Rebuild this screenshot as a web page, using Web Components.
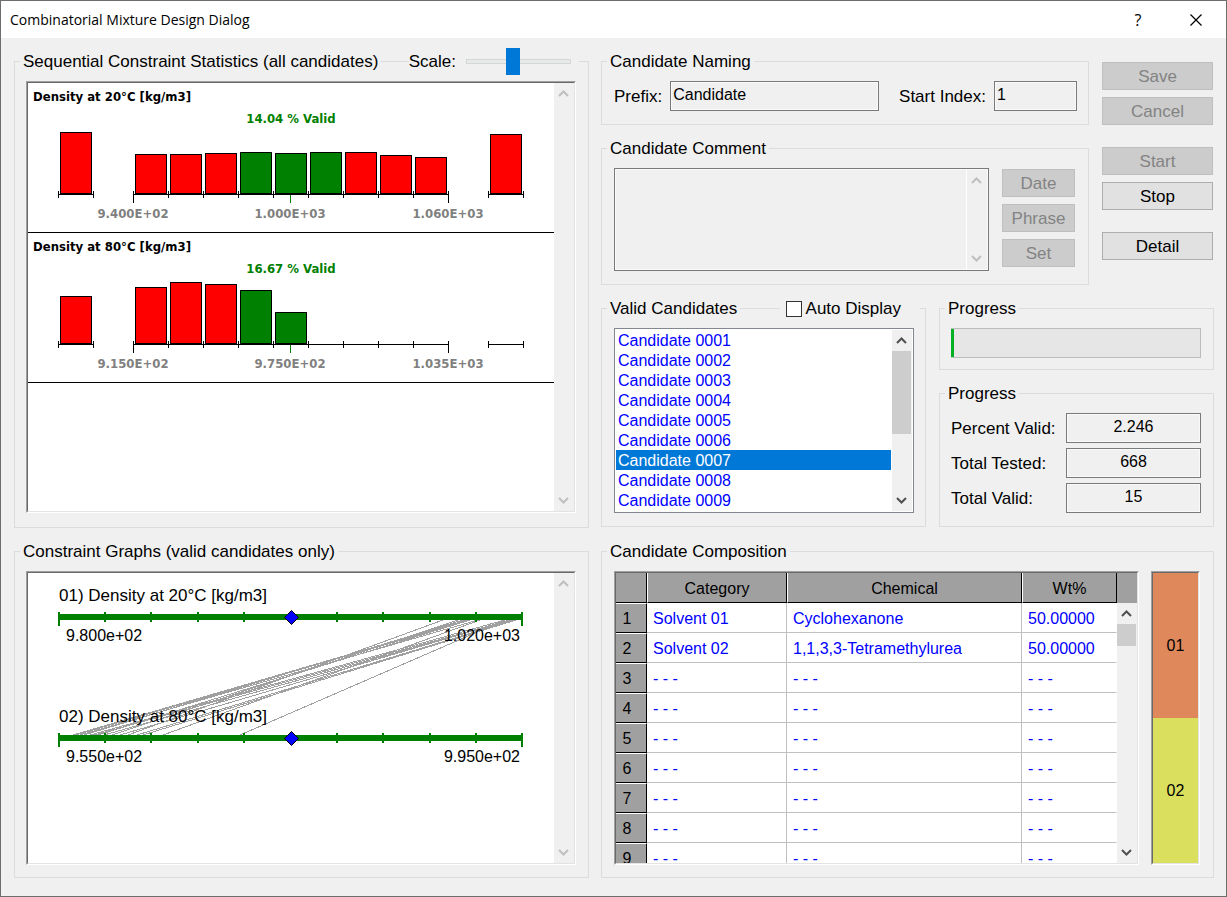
<!DOCTYPE html>
<html lang="en">
<head>
<meta charset="utf-8">
<title>Combinatorial Mixture Design Dialog</title>
<style>
    :root {
        --face: #f0f0f0;
        --line: #dcdcdc;
        --edge: #7a7a7a;
        --accent: #0078d7;
    }

    body {
        margin: 0;
        font: 17px/19px "Liberation Sans", Arial, sans-serif;
        color: #000;
        background: var(--face);
    }

    .sections {
        display: grid;
        grid-template-columns: minmax(0, 575fr) minmax(0, 613fr);
        gap: 14px 12px;
        padding: 14px 12px 18px 13px;
    }

    .top-right {
        display: flex;
        flex-direction: column;
        gap: 14px;
    }

    .row {
        display: flex;
        gap: 13px;
    }

    .stack {
        display: flex;
        flex-direction: column;
        gap: 14px;
        flex: 1;
        min-width: 0;
    }

    .actions {
        display: flex;
        flex-direction: column;
        flex: none;
        gap: 22px;
        width: 111px;
        margin: 10px 1px 0 0;
    }

    .buttons {
        display: flex;
        flex-direction: column;
        gap: 7px;
    }

    .naming {
        display: flex;
        gap: 20px;
    }

    .naming labeled-field:first-child {
        flex: 1;
        min-width: 0;
    }

    .comment {
        display: flex;
        gap: 13px;
    }

    .comment .buttons {
        flex: none;
        width: 73px;
        padding: 1px 2px 0 0;
    }

    .totals {
        display: flex;
        flex-direction: column;
        gap: 5px;
    }

    .valid {
        width: 325px;
    }

    .composition {
        display: flex;
        gap: 12px;
    }

    .composition sunken-panel:first-child {
        flex: 1;
    }

    .composition sunken-panel:last-child {
        width: 49px;
    }

    .statistics {
        --panel-height: 432px;
        --pad: 20px 12px 14px 11px;
    }

    .graphs {
        --pad: 20px 12px 12px 11px;
    }

    .edit {
        --pad: 20px 11px 13px 12px;
    }

    .meter {
        --pad: 20px 12px 11px 11px;
    }

    .counts {
        --pad: 20px 12px 13px 11px;
    }

    .result {
        --pad: 20px 13px 12px 12px;
    }
</style>
</head>
<body>
<dialog-window caption="Combinatorial Mixture Design Dialog">
    <div class="sections">
        <group-box class="statistics" caption="Sequential Constraint Statistics (all candidates)">
            <scale-slider slot="extra" label="Scale:" value="44"></scale-slider>
            <sunken-panel>
                <constraint-histogram caption="Density at 20°C [kg/m3]" valid="14.04 % Valid"
                    low="62" bars="40,40,41,42g,41g,42g,42,39,37" high="60"
                    labels="9.400E+02,1.000E+03,1.060E+03"></constraint-histogram>
                <constraint-histogram caption="Density at 80°C [kg/m3]" valid="16.67 % Valid"
                    low="48" bars="57,62,60,54g,32g,0,0,0,0" high="0"
                    labels="9.150E+02,9.750E+02,1.035E+03"></constraint-histogram>
                <scroll-bar slot="scroll" disabled></scroll-bar>
            </sunken-panel>
        </group-box>

        <div class="top-right">
            <div class="row">
                <div class="stack">
                    <group-box class="edit" caption="Candidate Naming">
                        <div class="naming">
                            <labeled-field label="Prefix:" value="Candidate"></labeled-field>
                            <labeled-field label="Start Index:" value="1" style="--field-width: 83px"></labeled-field>
                        </div>
                    </group-box>
                    <group-box class="edit" caption="Candidate Comment">
                        <div class="comment">
                            <comment-box label="Candidate Comment"></comment-box>
                            <div class="buttons">
                                <push-button disabled>Date</push-button>
                                <push-button disabled>Phrase</push-button>
                                <push-button disabled>Set</push-button>
                            </div>
                        </div>
                    </group-box>
                </div>
                <div class="actions">
                    <div class="buttons">
                        <push-button disabled>Save</push-button>
                        <push-button disabled>Cancel</push-button>
                    </div>
                    <div class="buttons">
                        <push-button disabled>Start</push-button>
                        <push-button>Stop</push-button>
                    </div>
                    <div class="buttons">
                        <push-button>Detail</push-button>
                    </div>
                </div>
            </div>
            <div class="row">
                <group-box class="valid edit" caption="Valid Candidates">
                    <check-box slot="extra" label="Auto Display"></check-box>
                    <candidate-list count="9" selected="7"></candidate-list>
                </group-box>
                <div class="stack">
                    <group-box class="meter" caption="Progress">
                        <progress-meter value="12" max="1000"></progress-meter>
                    </group-box>
                    <group-box class="counts" caption="Progress">
                        <div class="totals">
                            <labeled-field readonly label="Percent Valid:" value="2.246"></labeled-field>
                            <labeled-field readonly label="Total Tested:" value="668"></labeled-field>
                            <labeled-field readonly label="Total Valid:" value="15"></labeled-field>
                        </div>
                    </group-box>
                </div>
            </div>
        </div>

        <group-box class="graphs" caption="Constraint Graphs (valid candidates only)">
            <sunken-panel>
                <constraint-graph></constraint-graph>
                <scroll-bar slot="scroll" disabled></scroll-bar>
            </sunken-panel>
        </group-box>

        <group-box class="result" caption="Candidate Composition">
            <div class="composition">
                <sunken-panel>
                    <composition-table></composition-table>
                </sunken-panel>
                <sunken-panel>
                    <color-stack></color-stack>
                </sunken-panel>
            </div>
        </group-box>
    </div>
</dialog-window>

<script>
class BaseElement extends HTMLElement {
    connectedCallback() {
        if (this.shadowRoot) return;
        this.attachShadow({ mode: 'open' });
        this.shadowRoot.innerHTML = this.render();
    }

    attr(name, fallback = '') {
        return this.getAttribute(name) || fallback;
    }
}

class DialogWindow extends BaseElement {
    render() {
        return `
            <style>
                :host {
                    display: block;
                    box-sizing: border-box;
                    min-height: 100vh;
                    border: 1px solid #6d6d6d;
                    background: var(--face);
                }
                header {
                    display: flex;
                    align-items: center;
                    height: 37px;
                    padding: 0 1px 0 9px;
                    background: #fff;
                }
                h1 {
                    flex: 1;
                    margin: 0;
                    font: 14px/20px "Open Sans", "Noto Sans", sans-serif;
                }
                button {
                    display: flex;
                    align-items: center;
                    justify-content: center;
                    width: 58px;
                    height: 37px;
                    padding: 0;
                    border: 0;
                    background: none;
                    font: 16px/20px "Open Sans", "Noto Sans", sans-serif;
                }
            </style>
            <header>
                <h1>${this.attr('caption')}</h1>
                <button aria-label="Help">?</button>
                <button aria-label="Close">
                    <svg width="12" height="12" viewBox="0 0 12 12"><path d="M.5 .5L11.5 11.5M11.5 .5L.5 11.5" stroke="#000" stroke-width="1.2"/></svg>
                </button>
            </header>
            <slot></slot>
        `;
    }
}

class GroupBox extends BaseElement {
    render() {
        return `
            <style>
                :host {
                    display: flex;
                    flex-direction: column;
                    min-width: 0;
                }
                header {
                    display: flex;
                    align-items: center;
                    height: 19px;
                    white-space: nowrap;
                }
                i {
                    width: 6px;
                    height: 1px;
                    background: var(--line);
                }
                i.fill {
                    flex: 1;
                }
                .caption {
                    padding: 0 3px;
                }
                .body {
                    flex: 1;
                    margin-top: -10px;
                    padding: var(--pad, 20px 12px 13px);
                    border: 1px solid var(--line);
                    border-top: 0;
                }
            </style>
            <header>
                <i></i><span class="caption">${this.attr('caption')}</span><i class="fill"></i>
                <slot name="extra"></slot>
            </header>
            <div class="body" role="group" aria-label="${this.attr('caption')}"><slot></slot></div>
        `;
    }
}

class SunkenPanel extends BaseElement {
    render() {
        return `
            <style>
                :host {
                    display: flex;
                    box-sizing: border-box;
                    height: var(--panel-height, 294px);
                    border: 1px solid;
                    border-color: #a0a0a0 #fff #fff #a0a0a0;
                    background: #fff;
                }
                .inner {
                    display: flex;
                    flex: 1;
                    min-width: 0;
                    border: 1px solid;
                    border-color: #696969 #e3e3e3 #e3e3e3 #696969;
                }
                .view {
                    flex: 1;
                    min-width: 0;
                    overflow: hidden;
                }
            </style>
            <div class="inner">
                <div class="view"><slot></slot></div>
                <slot name="scroll"></slot>
            </div>
        `;
    }
}

class ScrollBar extends BaseElement {
    render() {
        const color = this.hasAttribute('disabled') ? '#bfbfbf' : '#505050';
        const arrow = d => `<svg width="20" height="21" viewBox="0 0 20 21"><path d="${d}" fill="none" stroke="${color}" stroke-width="2"/></svg>`;
        return `
            <style>
                :host {
                    display: flex;
                    flex-direction: column;
                    flex: none;
                    width: 20px;
                    background: var(--face);
                }
                svg {
                    display: block;
                    flex: none;
                }
                .track {
                    flex: 1;
                }
                .thumb {
                    width: 19px;
                    height: var(--thumb, 0);
                    background: #cdcdcd;
                }
            </style>
            ${arrow('M5 13L9.5 8.5L14 13')}
            <div class="track"><div class="thumb"></div></div>
            ${arrow('M5 8L9.5 12.5L14 8')}
        `;
    }
}

class PushButton extends BaseElement {
    render() {
        return `
            <style>
                :host {
                    display: block;
                }
                button {
                    display: block;
                    box-sizing: border-box;
                    width: 100%;
                    height: 28px;
                    padding: 0;
                    border: 1px solid #adadad;
                    background: #e1e1e1;
                    color: #000;
                    font: inherit;
                }
                button:disabled {
                    border-color: #bfbfbf;
                    background: #ccc;
                    color: #838383;
                }
            </style>
            <button ${this.hasAttribute('disabled') ? 'disabled' : ''}><slot></slot></button>
        `;
    }
}

class LabeledField extends BaseElement {
    render() {
        const readonly = this.hasAttribute('readonly');
        return `
            <style>
                :host {
                    display: flex;
                    align-items: center;
                    gap: 8px;
                }
                label {
                    white-space: nowrap;
                    margin-right: auto;
                }
                input {
                    box-sizing: border-box;
                    min-width: 0;
                    height: 30px;
                    padding: 0 2px 2px;
                    border: 1px solid var(--edge);
                    border-radius: 0;
                    outline: 0;
                    background: var(--face);
                    box-shadow: inset 0 0 0 1px #fafafa;
                    color: #000;
                    font: inherit;
                    font-size: 16px;
                    ${readonly ? 'width: 135px; text-align: center;' : 'width: var(--field-width, auto); flex: 1 1 var(--field-width, 0);'}
                }
            </style>
            <label for="field">${this.attr('label')}</label>
            <input id="field" type="text" value="${this.attr('value')}" ${readonly ? 'readonly' : ''}>
        `;
    }
}

class CommentBox extends BaseElement {
    render() {
        return `
            <style>
                :host {
                    display: flex;
                    flex: 1;
                    min-width: 0;
                    box-sizing: border-box;
                    height: 103px;
                    border: 1px solid var(--edge);
                    padding: 1px;
                    background: #fafafa;
                }
                textarea {
                    flex: 1;
                    min-width: 0;
                    padding: 2px;
                    border: 0;
                    border-right: 1px solid #fff;
                    outline: 0;
                    resize: none;
                    background: var(--face);
                    font: inherit;
                }
            </style>
            <textarea aria-label="${this.attr('label')}"></textarea>
            <scroll-bar disabled></scroll-bar>
        `;
    }
}

class ScaleSlider extends BaseElement {
    render() {
        return `
            <style>
                :host {
                    display: flex;
                    align-items: center;
                }
                input {
                    appearance: none;
                    width: 105px;
                    height: 27px;
                    margin: 0 8px 0 10px;
                    background: none;
                }
                input::-webkit-slider-runnable-track {
                    box-sizing: border-box;
                    height: 5px;
                    border: 1px solid #d6d6d6;
                    background: #e7eaea;
                }
                input::-webkit-slider-thumb {
                    appearance: none;
                    width: 14px;
                    height: 27px;
                    margin-top: -12px;
                    background: var(--accent);
                }
                i {
                    width: 10px;
                    height: 1px;
                    background: var(--line);
                }
            </style>
            <label for="scale">${this.attr('label')}</label>
            <input id="scale" type="range" value="${this.attr('value')}">
            <i></i>
        `;
    }
}

class CheckBox extends BaseElement {
    render() {
        return `
            <style>
                :host {
                    display: flex;
                    align-items: center;
                    padding-left: 6px;
                }
                input {
                    appearance: none;
                    box-sizing: border-box;
                    width: 16px;
                    height: 16px;
                    margin: 0 4px 0 0;
                    border: 1px solid #333;
                    background: #fff;
                }
                label {
                    padding-right: 19px;
                }
                i {
                    width: 6px;
                    height: 1px;
                    background: var(--line);
                }
            </style>
            <input id="check" type="checkbox"><label for="check">${this.attr('label')}</label><i></i>
        `;
    }
}

class CandidateList extends BaseElement {
    render() {
        const selected = Number(this.attr('selected'));
        let options = '';
        for (let i = 1; i <= Number(this.attr('count')); i++) {
            options += `<option ${i === selected ? 'selected' : ''}>Candidate ${String(i).padStart(4, '0')}</option>`;
        }
        return `
            <style>
                :host {
                    display: flex;
                    box-sizing: border-box;
                    height: 185px;
                    padding: 1px;
                    border: 1px solid #828790;
                    background: #fff;
                }
                select {
                    flex: 1;
                    min-width: 0;
                    height: 180px;
                    margin-right: 1px;
                    padding: 0;
                    border: 0;
                    border-radius: 0;
                    outline: 0;
                    overflow: hidden;
                    background: #fff;
                    font: inherit;
                    font-size: 16px;
                }
                option {
                    box-sizing: border-box;
                    height: 20px;
                    min-height: 20px;
                    padding: 2px 2px 0;
                    color: #00f;
                }
                option:checked {
                    background: linear-gradient(var(--accent), var(--accent));
                    color: #fff;
                }
                scroll-bar {
                    --thumb: 60%;
                }
            </style>
            <select size="9" aria-label="Valid Candidates">${options}</select>
            <scroll-bar></scroll-bar>
        `;
    }
}

class ProgressMeter extends BaseElement {
    render() {
        return `
            <style>
                :host {
                    display: block;
                }
                progress {
                    appearance: none;
                    display: block;
                    box-sizing: border-box;
                    width: 100%;
                    height: 30px;
                    border: 1px solid #bcbcbc;
                    border-left: 0;
                }
                progress::-webkit-progress-bar {
                    background: #e6e6e6;
                }
                progress::-webkit-progress-value {
                    background: #06b025;
                }
            </style>
            <progress aria-label="Progress" value="${this.attr('value')}" max="${this.attr('max')}"></progress>
        `;
    }
}

class ConstraintHistogram extends BaseElement {
    render() {
        const axis = 111;
        const step = 35;
        const bar = (x, spec) => {
            const h = parseInt(spec, 10);
            if (!h) return '';
            const fill = spec.endsWith('g') ? '#008000' : '#f00';
            return `<rect x="${x + 0.5}" y="${axis - h + 0.5}" width="31" height="${h - 1}" fill="${fill}" stroke="#000"/>`;
        };
        const tick = (x, bottom = 4) => `M${x + 0.5} ${axis - 3}v${3 + bottom}`;

        const bars = this.attr('bars').split(',').map((spec, i) => bar(107 + i * step, spec)).join('');
        const [min, mid, max] = this.attr('labels').split(',');

        // underflow, main and overflow segments share one path
        let path = `M30 ${axis + 0.5}H66M105 ${axis + 0.5}H421M460 ${axis + 0.5}H496`;
        path += tick(30) + tick(65) + tick(460) + tick(495) + tick(105, 9) + tick(420, 9);
        for (let x = 105 + step; x < 420; x += step) path += tick(x);

        return `
            <style>
                :host {
                    display: block;
                    border-bottom: 1px solid #000;
                    height: 149px;
                }
                svg {
                    display: block;
                }
                text {
                    font: bold 13px "DejaVu Sans Condensed", "DejaVu Sans", sans-serif;
                }
                .valid {
                    fill: #008000;
                    text-anchor: middle;
                }
                .label {
                    fill: #808080;
                    text-anchor: middle;
                }
            </style>
            <svg width="526" height="149" viewBox="0 0 526 149">
                <text x="5" y="18">${this.attr('caption')}</text>
                <text class="valid" x="263" y="40">${this.attr('valid')}</text>
                ${bar(32, this.attr('low'))}${bars}${bar(462, this.attr('high'))}
                <path d="${path}" stroke="#000" fill="none"/>
                <path d="M262.5 112v8" stroke="#008000"/>
                <text class="label" x="105" y="135">${min}</text>
                <text class="label" x="262" y="135">${mid}</text>
                <text class="label" x="420" y="135">${max}</text>
            </svg>
        `;
    }
}

class ConstraintGraph extends BaseElement {
    render() {
        const scales = [
            { y: 44, name: '01) Density at 20°C [kg/m3]', min: '9.800e+02', max: '1.020e+03' },
            { y: 165, name: '02) Density at 80°C [kg/m3]', min: '9.550e+02', max: '9.950e+02' }
        ];
        // x on the lower scale, x on the upper scale, one pair per candidate
        const links = [
            [45, 439], [48, 442], [52, 450], [56, 435], [62, 477], [66, 482], [70, 442],
            [76, 484], [84, 430], [92, 482], [100, 415], [109, 486], [115, 488], [135, 452], [212, 477]
        ];
        const lines = links.map(([a, b]) => `M${a} 162L${b} 47`).join('');

        const scale = ({ y, name, min, max }) => {
            let ticks = `M31 ${y - 5}v14M494 ${y - 5}v14`;
            for (const x of [77, 123, 170, 216, 309, 355, 402, 448]) ticks += `M${x} ${y - 5}v10`;
            return `
                <path d="M30 ${y}H495" stroke="#008000" stroke-width="6"/>
                <path d="${ticks}" stroke="#008000" stroke-width="2"/>
                <path d="M263.5 ${y - 6.5}l7 7l-7 7l-7 -7z" fill="#00f" stroke="#000"/>
                <text class="name" x="31" y="${y - 16}">${name}</text>
                <text x="38" y="${y + 24}">${min}</text>
                <text x="492" y="${y + 24}" text-anchor="end">${max}</text>
            `;
        };

        return `
            <style>
                :host, svg {
                    display: block;
                }
                text {
                    font-size: 16px;
                }
                .name {
                    font-size: 17px;
                }
            </style>
            <svg width="526" height="290" viewBox="0 0 526 290">
                <path d="${lines}" stroke="#a0a0a0" fill="none" shape-rendering="crispEdges"/>
                ${scales.map(scale).join('')}
            </svg>
        `;
    }
}

class CompositionTable extends BaseElement {
    render() {
        const rows = [
            ['Solvent 01', 'Cyclohexanone', '50.00000'],
            ['Solvent 02', '1,1,3,3-Tetramethylurea', '50.00000']
        ];
        while (rows.length < 9) rows.push(['- - -', '- - -', '- - -']);

        return `
            <style>
                :host {
                    display: grid;
                    grid-template-columns: 1fr 20px;
                    grid-template-rows: 30px 260px;
                    font-size: 16px;
                }
                table {
                    grid-row: 1 / 3;
                    width: 100%;
                    border-collapse: separate;
                    border-spacing: 0;
                    table-layout: fixed;
                }
                th, td {
                    box-sizing: border-box;
                    height: 30px;
                    padding: 2px 6px 0;
                    font-weight: normal;
                    white-space: nowrap;
                }
                th {
                    background: #a0a0a0;
                }
                thead th {
                    border-right: 1px solid #000;
                    border-bottom: 1px solid #000;
                }
                thead th + th {
                    border-left: 1px solid #fff;
                }
                tbody th {
                    padding: 0 8px 0 0;
                    text-align: center;
                    border-top: 1px solid #fff;
                    border-right: 1px solid #000;
                    border-bottom: 1px solid #000;
                }
                td {
                    border-right: 1px solid #c0c0c0;
                    border-bottom: 1px solid #c0c0c0;
                    color: #00f;
                }
                td:last-child {
                    border-right-color: #fff;
                }
                .corner {
                    background: #a0a0a0;
                }
                .rows {
                    width: 31px;
                }
                .category {
                    width: 140px;
                }
                .weight {
                    width: 95px;
                }
                scroll-bar {
                    --thumb: 10%;
                }
            </style>
            <table>
                <colgroup><col class="rows"><col class="category"><col><col class="weight"></colgroup>
                <thead><tr><th></th><th>Category</th><th>Chemical</th><th>Wt%</th></tr></thead>
                <tbody>
                    ${rows.map((row, i) => `<tr><th>${i + 1}</th>${row.map(cell => `<td>${cell}</td>`).join('')}</tr>`).join('')}
                </tbody>
            </table>
            <div class="corner"></div>
            <scroll-bar></scroll-bar>
        `;
    }
}

class ColorStack extends BaseElement {
    render() {
        return `
            <style>
                :host {
                    display: flex;
                    flex-direction: column;
                    height: 100%;
                    font-size: 16px;
                }
                div {
                    display: flex;
                    flex: 1;
                    align-items: center;
                    justify-content: center;
                    background: #de885c;
                }
                div + div {
                    background: #dae05e;
                }
            </style>
            <div>01</div>
            <div>02</div>
        `;
    }
}

customElements.define('scroll-bar', ScrollBar);
customElements.define('dialog-window', DialogWindow);
customElements.define('group-box', GroupBox);
customElements.define('sunken-panel', SunkenPanel);
customElements.define('push-button', PushButton);
customElements.define('labeled-field', LabeledField);
customElements.define('comment-box', CommentBox);
customElements.define('scale-slider', ScaleSlider);
customElements.define('check-box', CheckBox);
customElements.define('candidate-list', CandidateList);
customElements.define('progress-meter', ProgressMeter);
customElements.define('constraint-histogram', ConstraintHistogram);
customElements.define('constraint-graph', ConstraintGraph);
customElements.define('composition-table', CompositionTable);
customElements.define('color-stack', ColorStack);
</script>
</body>
</html>
